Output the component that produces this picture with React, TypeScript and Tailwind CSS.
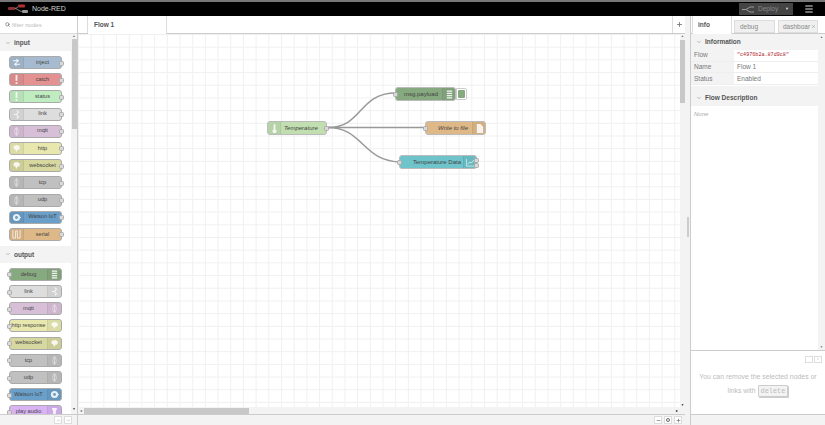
import { ChevronDown, Menu, Plus, Minus, Search, X } from 'lucide-react'

type IconKind = 'arrows' | 'alert' | 'link' | 'wave' | 'globe' | 'watson' | 'serial' | 'list' | 'audio' | 'thermo' | 'file' | 'chart'

function NodeIcon({ kind }: { kind: IconKind }) {
  const common = { width: 9, height: 9, viewBox: '0 0 10 10', fill: 'white', opacity: 0.85 }
  switch (kind) {
    case 'arrows':
      return <svg {...common}><path d="M1 3h4V1l3 2.5L5 6V4H1zM9 7H5V5L2 7.5 5 10V8h4z" transform="translate(0 -0.5)" /></svg>
    case 'alert':
      return <svg {...common}><rect x="4" y="0" width="2" height="6.5" /><rect x="4" y="8" width="2" height="2" /></svg>
    case 'link':
      return <svg {...common}><path d="M5.500 0 8 2.500 5.500 5 8 7.500 5.500 10 5 8.800 6.500 7.500 4 5l2.500-2.500L5 1.200z" /><path d="M2 4.500h3v1H2z" /></svg>
    case 'wave':
      return <svg {...common} fill="none" stroke="white" strokeWidth="0.8" opacity="0.6"><path d="M4 1Q2 5 4 9M6 1Q8 5 6 9M5 0v10" /></svg>
    case 'globe':
      return <svg {...common}><path d="M2 2 6 1l3 2-1 3-2 .5L5 9 3.500 6 1.500 5z" /></svg>
    case 'watson':
      return <svg {...common}><circle cx="5" cy="5" r="4" /><circle cx="5" cy="5" r="1.600" fill="#6a9fc9" /><rect x="8" y="4.500" width="2" height="1" /></svg>
    case 'serial':
      return <svg {...common} fill="none" stroke="white" strokeWidth="1"><path d="M1 0v9h3V1h2v8h3V0" /></svg>
    case 'list':
      return <svg {...common}><rect x="2" y="0.500" width="6" height="1.500" /><rect x="2" y="3" width="6" height="1.500" /><rect x="2" y="5.500" width="6" height="1.500" /><rect x="2" y="8" width="6" height="1.500" /></svg>
    case 'audio':
      return <svg {...common}><path d="M2 1h6L6.500 5v3L5 9.500 3.500 8V5z" /></svg>
    case 'thermo':
      return <svg {...common}><path d="M4 1a1 1 0 0 1 2 0v5a2.200 2.200 0 1 1-2 0z" /></svg>
    case 'file':
      return <svg {...common}><path d="M2 0h4l3 3v7H2z" /></svg>
    case 'chart':
      return <svg {...common} fill="none" stroke="white" strokeWidth="0.8"><path d="M0.500 1v8h9M2 7l2-2.500 2 1L9 2" /></svg>
  }
}

type PaletteItem = { label: string; color: string; icon: IconKind }

const inputNodes: PaletteItem[] = [
  { label: 'inject', color: 'bg-[#a6bbcf]', icon: 'arrows' },
  { label: 'catch', color: 'bg-[#e49191]', icon: 'alert' },
  { label: 'status', color: 'bg-[#c0edc0]', icon: 'alert' },
  { label: 'link', color: 'bg-[#dddddd]', icon: 'link' },
  { label: 'mqtt', color: 'bg-[#d8bfd8]', icon: 'wave' },
  { label: 'http', color: 'bg-[#e7e7ae]', icon: 'globe' },
  { label: 'websocket', color: 'bg-[#d7d7a0]', icon: 'globe' },
  { label: 'tcp', color: 'bg-[#c0c0c0]', icon: 'wave' },
  { label: 'udp', color: 'bg-[#c0c0c0]', icon: 'wave' },
  { label: 'Watson IoT', color: 'bg-[#6a9fc9]', icon: 'watson' },
  { label: 'serial', color: 'bg-[#deb887]', icon: 'serial' },
]

const outputNodes: PaletteItem[] = [
  { label: 'debug', color: 'bg-[#87a980]', icon: 'list' },
  { label: 'link', color: 'bg-[#dddddd]', icon: 'link' },
  { label: 'mqtt', color: 'bg-[#d8bfd8]', icon: 'wave' },
  { label: 'http response', color: 'bg-[#e7e7ae]', icon: 'globe' },
  { label: 'websocket', color: 'bg-[#d7d7a0]', icon: 'globe' },
  { label: 'tcp', color: 'bg-[#c0c0c0]', icon: 'wave' },
  { label: 'udp', color: 'bg-[#c0c0c0]', icon: 'wave' },
  { label: 'Watson IoT', color: 'bg-[#6a9fc9]', icon: 'watson' },
  { label: 'play audio', color: 'bg-[#dab3f5]', icon: 'audio' },
]

function Port({ className }: { className: string }) {
  return <span className={`absolute w-[5px] h-[5px] rounded-[1.500px] bg-[#d9d9d9] border-[0.5px] border-[#aaa] ${className}`} />
}

function PaletteNode({ item, output }: { item: PaletteItem; output?: boolean }) {
  return (
    <div className={`relative w-[53px] h-[13px] shrink-0 rounded-[3px] border-[0.5px] border-[#aaa] flex items-center ${item.color} ${output ? 'flex-row-reverse' : ''}`}>
      <span className={`w-[14px] h-full flex items-center justify-center bg-black/5 ${output ? 'border-l rounded-r-[3px]' : 'border-r rounded-l-[3px]'} border-black/5`}>
        <NodeIcon kind={item.icon} />
      </span>
      <span className="flex-1 text-center text-[5.600px] leading-none text-[#444] whitespace-nowrap">{item.label}</span>
      <Port className={`top-[3.500px] ${output ? 'left-[-3px]' : 'right-[-3px]'}`} />
    </div>
  )
}

function PaletteSection({ title, items, output }: { title: string; items: PaletteItem[]; output?: boolean }) {
  return (
    <div className="flex flex-col">
      <div className="h-[17px] bg-[#f3f3f3] flex items-center gap-[3px] pl-[5px] text-[6.500px] font-bold text-[#555]">
        <ChevronDown size={6} strokeWidth={2} className="text-[#888]" />
        {title}
      </div>
      <div className="flex flex-col gap-[4.200px] pl-[9px] pt-[5px] pb-[5px]">
        {items.map((item, i) => (
          <PaletteNode key={i} item={item} output={output} />
        ))}
      </div>
    </div>
  )
}

function Palette() {
  return (
    <aside className="w-[78px] shrink-0 flex flex-col bg-[#f3f3f3] border-r border-[#ccc]">
      <div className="h-[18px] shrink-0 bg-white border-b border-[#ddd] flex items-center gap-[2px] pl-[5px] text-[6.100px] text-[#bbb]">
        <Search size={5} strokeWidth={3} className="text-[#666]" />
        filter nodes
      </div>
      <div className="flex-1 min-h-0 flex overflow-hidden">
        <div className="flex-1 min-w-0 bg-white h-full overflow-hidden">
          <PaletteSection title="input" items={inputNodes} />
          <PaletteSection title="output" items={outputNodes} output />
        </div>
        <div className="w-[6px] shrink-0 bg-[#f3f3f3] flex flex-col items-center">
          <span className="h-[5px] text-[3px] leading-none text-[#666] pt-[1px]">▲</span>
          <div className="w-[5px] h-[90px] bg-[#c8c8c8]" />
          <div className="flex-1" />
          <span className="h-[6px] text-[3px] leading-none text-black">▼</span>
        </div>
      </div>
      <div className="h-[11px] shrink-0 bg-[#f3f3f3] border-t border-[#ccc] flex items-center justify-end gap-[2px] pr-[5px]">
        <span className="w-[8px] h-[8px] bg-white border border-[#ddd] flex items-center justify-center"><ChevronDown size={5} className="rotate-180 text-[#888]" /></span>
        <span className="w-[8px] h-[8px] bg-white border border-[#ddd] flex items-center justify-center"><ChevronDown size={5} className="text-[#888]" /></span>
      </div>
    </aside>
  )
}

function FlowNode({ label, color, icon, italic, iconRight, className, labelClass, inPort, outPort, children }: {
  label: string
  color: string
  icon: IconKind
  italic?: boolean
  iconRight?: boolean
  className: string
  labelClass: string
  inPort?: boolean
  outPort?: boolean
  children?: React.ReactNode
}) {
  return (
    <div className={`absolute h-[14px] rounded-[3px] border-[0.5px] border-[#bbb] flex items-center ${color} ${iconRight ? 'flex-row-reverse' : ''} ${className}`}>
      <span className={`w-[13px] h-full flex items-center justify-center bg-black/5 ${iconRight ? 'border-l rounded-r-[3px]' : 'border-r rounded-l-[3px]'} border-black/5`}>
        <NodeIcon kind={icon} />
      </span>
      <span className={`flex-1 text-[6px] leading-none text-[#444] whitespace-nowrap ${labelClass} ${italic ? 'italic' : ''}`}>{label}</span>
      {inPort && <Port className="left-[-3px] top-[4px]" />}
      {outPort && <Port className="right-[-3px] top-[4px]" />}
      {children}
    </div>
  )
}

function Workspace() {
  return (
    <main className="flex-1 min-w-0 flex flex-col bg-[#f3f3f3]">
      <div className="h-[18px] shrink-0 flex border-b border-[#ccc] bg-white">
        <div className="w-[10px] border-r border-[#ddd] bg-white" />
        <div className="w-[79px] h-[18px] bg-white border-r border-[#ddd] pl-[6px] flex items-center text-[6.500px] font-bold text-[#555]">Flow 1</div>
        <div className="flex-1 bg-white" />
        <div className="w-[13px] border-l border-[#ddd] flex items-center justify-center"><Plus size={7} strokeWidth={3} className="text-[#777]" /></div>
      </div>
      <div className="flex-1 min-h-0 flex">
        <div className="relative flex-1 min-w-0 flex flex-col">
          <div className="relative flex-1 min-h-0 overflow-hidden bg-white bg-[linear-gradient(#f0f0f0_1px,transparent_1px),linear-gradient(90deg,#f0f0f0_1px,transparent_1px)] bg-[size:12.700px_12.700px]">
            <svg className="absolute inset-0 w-full h-full" fill="none" stroke="#999" strokeWidth="1.500">
              <path d="M250 93.500 C 285 93.500, 280 59, 318 59" />
              <path d="M250 93.500 L 348 93.500" />
              <path d="M250 93.500 C 285 93.500, 285 128, 323 128" />
            </svg>
            <FlowNode label="Temperature" italic icon="thermo" color="bg-[#c0deb0]" labelClass="pl-[3px]" className="left-[189px] top-[87px] w-[60px]" outPort />
            <FlowNode label="msg.payload" icon="list" iconRight color="bg-[#87a980]" labelClass="text-right pr-[4px]" className="left-[317px] top-[53px] w-[61px]" inPort />
            <div className="absolute left-[378px] top-[54px] w-[11px] h-[12px] bg-white border-[0.5px] border-[#ccc] rounded-r-[2px] flex items-center justify-center">
              <span className="w-[7px] h-[8px] rounded-[1px] bg-[#87a980]" />
            </div>
            <FlowNode label="Write to file" italic icon="file" iconRight color="bg-[#deb887]" labelClass="text-right pr-[4px]" className="left-[347px] top-[87px] w-[61px]" inPort />
            <FlowNode label="Temperature Data" icon="chart" iconRight color="bg-[#6fc3cb]" labelClass="text-right pr-[2px]" className="left-[321px] top-[121px] w-[78px]" inPort>
              <Port className="right-[-3px] top-[1.500px]" />
              <Port className="right-[-3px] top-[7px]" />
            </FlowNode>
          </div>
          <div className="h-[7px] shrink-0 bg-[#f3f3f3] flex items-center">
            <span className="w-[6px] text-[4px] leading-none text-[#666] text-center">◂</span>
            <div className="w-[165px] h-[6px] bg-[#c8c8c8]" />
            <div className="flex-1" />
            <span className="w-[6px] text-[4px] leading-none text-black text-center">▸</span>
          </div>
        </div>
        <div className="w-[5px] shrink-0 bg-[#f3f3f3] flex flex-col items-center">
          <span className="h-[6px] text-[3px] leading-none text-[#666] pt-[1px]">▲</span>
          <div className="w-[5px] h-[63px] bg-[#c8c8c8]" />
          <div className="flex-1" />
          <span className="h-[10px] text-[3px] leading-none text-black">▼</span>
        </div>
      </div>
      <div className="h-[11px] shrink-0 bg-[#f3f3f3] border-t border-[#ccc] flex items-center justify-end gap-[2px] pr-[3px]">
        <span className="w-[8px] h-[8px] bg-white border border-[#ddd] flex items-center justify-center"><Minus size={5} strokeWidth={3} className="text-[#666]" /></span>
        <span className="w-[8px] h-[8px] bg-white border border-[#ddd] flex items-center justify-center"><span className="w-[4px] h-[4px] rounded-full border border-[#666]" /></span>
        <span className="w-[8px] h-[8px] bg-white border border-[#ddd] flex items-center justify-center"><Plus size={5} strokeWidth={3} className="text-[#666]" /></span>
      </div>
    </main>
  )
}

function InfoRow({ label, children }: { label: string; children: React.ReactNode }) {
  return (
    <div className="h-[11.700px] flex items-center border-b border-[#eee] text-[6.500px] text-[#777]">
      <span className="w-[43px] pl-[3px] bg-[#f3f3f3] h-full flex items-center">{label}</span>
      <span className="flex-1 pl-[3px] bg-white h-full flex items-center">{children}</span>
    </div>
  )
}

function Sidebar() {
  return (
    <aside className="w-[140px] shrink-0 flex">
      <div className="w-[5px] shrink-0 bg-[#f3f3f3] flex items-center">
        <span className="ml-[2px] mt-[12px] w-[2px] h-[20px] bg-[#ccc]" />
      </div>
      <div className="flex-1 min-w-0 flex flex-col border-l border-[#ccc] bg-[#f3f3f3]">
        <div className="h-[18px] shrink-0 bg-white border-b border-[#ccc] flex pl-[1px] pr-[7px]">
          <div className="w-[40px] h-[18px] border-x border-[#ddd] bg-white pl-[5px] flex items-center text-[6.500px] font-bold text-[#555]">info</div>
          <div className="ml-[2px] w-[41px] h-[13px] self-end bg-[#f0f0f0] border border-[#ddd] pl-[5px] flex items-center text-[6.500px] text-[#888]">debug</div>
          <div className="ml-[3px] flex-1 h-[13px] self-end bg-[#f0f0f0] border border-[#ddd] pl-[4px] flex items-center justify-between text-[6.500px] text-[#888] overflow-hidden">
            dashboar
            <X size={5} className="text-[#888] mr-[1px]" />
          </div>
        </div>
        <div className="h-[316px] shrink-0 flex">
          <div className="flex-1 min-w-0 flex flex-col">
            <div className="h-[16px] shrink-0 flex items-center gap-[3px] pl-[5px] text-[6.500px] font-bold text-[#555]">
              <ChevronDown size={6} strokeWidth={2} className="text-[#888]" />
              Information
            </div>
            <InfoRow label="Flow"><span className="font-['Liberation_Mono',monospace] text-[5.100px] text-[#ad1625]">"c4976b2a.87d9c8"</span></InfoRow>
            <InfoRow label="Name">Flow 1</InfoRow>
            <InfoRow label="Status">Enabled</InfoRow>
            <div className="h-[1px] bg-white" />
            <div className="h-[16px] shrink-0 mt-[4px] flex items-center gap-[3px] pl-[5px] text-[6.500px] font-bold text-[#555]">
              <ChevronDown size={6} strokeWidth={2} className="text-[#888]" />
              Flow Description
            </div>
            <div className="flex-1 bg-white pl-[3px] pt-[4px] text-[6px] italic text-[#aaa]">None</div>
          </div>
          <div className="w-[7px] shrink-0 flex flex-col justify-between items-center text-[3px] text-[#666] py-[1px]">
            <span>▲</span>
            <span>▼</span>
          </div>
        </div>
        <div className="flex-1 min-h-0 bg-white border-t border-[#ccc] flex flex-col">
          <div className="h-[12px] shrink-0 flex justify-end items-center gap-[1px] pr-[3px] pt-[4px]">
            <span className="w-[8px] h-[7px] border border-[#ddd]" />
            <span className="w-[8px] h-[7px] border border-[#ddd] flex items-center justify-center"><X size={4} className="text-[#bbb]" /></span>
          </div>
          <div className="flex-1 flex flex-col items-center pt-[9px] text-[6.900px] text-[#bbb]">
            <span>You can remove the selected nodes or</span>
            <span className="mt-[3px] flex items-center gap-[2px]">
              links with
              <span className="font-['Liberation_Mono',monospace] text-[6.900px] px-[2px] h-[12px] flex items-center bg-[#f3f3f3] border border-[#ccc] rounded-[1px] shadow-[1px_1px_0_#ccc]">delete</span>
            </span>
          </div>
        </div>
        <div className="h-[11px] shrink-0 bg-[#f3f3f3] border-t border-[#ccc]" />
      </div>
    </aside>
  )
}

export default function App() {
  return (
    <div className="w-[825px] h-[425px] flex flex-col overflow-hidden bg-white font-['Liberation_Sans',Arial,sans-serif]">
      <header className="h-[16px] shrink-0 bg-black border-t-[2px] border-[#777] flex items-center justify-between">
        <div className="flex items-center gap-[4px] pl-[8px]">
          <svg width="20" height="10" viewBox="0 0 20 10" fill="none">
            <path d="M6 4.500C10 4.500 9 2 13 2M6 4.500C10 4.500 10 7.500 15 7.500" stroke="#aaa" strokeWidth="0.800" />
            <rect x="0" y="3" width="7" height="3" rx="1" fill="#8f3030" />
            <rect x="10" y="0.500" width="7" height="3" rx="1" fill="#b03030" />
            <rect x="14" y="6" width="6" height="3" rx="1" fill="#999" />
          </svg>
          <span className="text-[7px] text-[#d4d4d4]">Node-RED</span>
        </div>
        <div className="flex items-center">
          <div className="w-[54px] h-[12px] bg-[#444] flex items-center pl-[3px] text-[6.500px] text-[#888]">
            <svg width="13" height="7" viewBox="0 0 13 7" fill="none" stroke="#999" strokeWidth="1"><path d="M0 3.500h4M8 1h4M8 6h4M4 3.500 8 1M4 3.500 8 6" /></svg>
            <span className="ml-[3px] flex-1">Deploy</span>
            <span className="text-[4px] text-[#ddd] pr-[4px]">▼</span>
          </div>
          <div className="w-[32px] flex justify-center"><Menu size={10} strokeWidth={2.500} className="text-[#ddd]" /></div>
        </div>
      </header>
      <div className="flex-1 min-h-0 flex">
        <Palette />
        <Workspace />
        <Sidebar />
      </div>
    </div>
  )
}
